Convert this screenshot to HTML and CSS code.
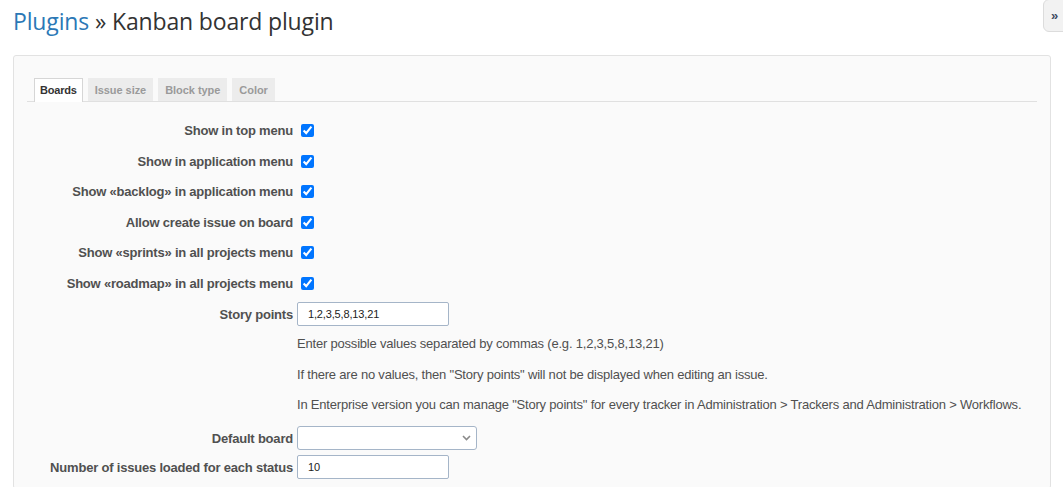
FILE: index.html
```html
<!DOCTYPE html>
<html lang="en">
<head>
<meta charset="utf-8">
<title>Kanban board plugin</title>
<link rel="stylesheet" href="styles.css">
</head>
<body>
<div class="sidebar-toggle">»</div>
<h2 class="title"><a class="crumb" href="#">Plugins</a> » Kanban board plugin</h2>
<div class="box">
  <div class="tabs">
    <span class="tab selected">Boards</span>
    <span class="tab">Issue size</span>
    <span class="tab">Block type</span>
    <span class="tab">Color</span>
  </div>
  <div class="form">
    <div class="row"><label class="lbl">Show in top menu</label><input class="cb" type="checkbox" checked></div>
    <div class="row"><label class="lbl">Show in application menu</label><input class="cb" type="checkbox" checked></div>
    <div class="row"><label class="lbl">Show «backlog» in application menu</label><input class="cb" type="checkbox" checked></div>
    <div class="row"><label class="lbl">Allow create issue on board</label><input class="cb" type="checkbox" checked></div>
    <div class="row"><label class="lbl">Show «sprints» in all projects menu</label><input class="cb" type="checkbox" checked></div>
    <div class="row"><label class="lbl">Show «roadmap» in all projects menu</label><input class="cb" type="checkbox" checked></div>
    <div class="row"><label class="lbl">Story points</label><input class="text" type="text" value="1,2,3,5,8,13,21"></div>
    <div class="help">
      <p>Enter possible values separated by commas (e.g. 1,2,3,5,8,13,21)</p>
      <p>If there are no values, then "Story points" will not be displayed when editing an issue.</p>
      <p>In Enterprise version you can manage "Story points" for every tracker in Administration &gt; Trackers and Administration &gt; Workflows.</p>
    </div>
    <div class="row row-select"><label class="lbl">Default board</label>
      <div class="select-wrap">
        <select class="select"><option></option></select>
        <svg class="chev" width="9" height="6" viewBox="0 0 9 6"><path d="M1 1 L4.5 4.5 L8 1" fill="none" stroke="#8a8a8a" stroke-width="1.6"/></svg>
      </div>
    </div>
    <div class="row row-num"><label class="lbl">Number of issues loaded for each status</label><input class="text" type="text" value="10"></div>
  </div>
</div>
</body>
</html>
```
FILE: styles.css
```css
html, body {
  margin: 0;
  padding: 0;
  background: #fff;
  overflow: hidden;
}
body {
  font-family: "Liberation Sans", Arial, sans-serif;
  font-size: 13px;
  color: #505050;
  position: relative;
  height: 487px;
}
.sidebar-toggle {
  position: absolute;
  top: -1px;
  right: -6px;
  width: 26px;
  height: 33px;
  background: #f2f2f2;
  border: 1px solid #dcdcdc;
  border-radius: 6px 0 0 6px;
  font-weight: bold;
  font-size: 13px;
  color: #3c4a60;
  line-height: 31px;
  padding-left: 7px;
  box-sizing: border-box;
}
.title {
  margin: 0;
  padding: 6px 0 0 13px;
  height: 49px;
  box-sizing: border-box;
  font-family: "Open Sans", sans-serif;
  font-weight: 400;
  font-size: 23px;
  line-height: 30px;
  color: #333;
  letter-spacing: -0.15px;
}
.crumb {
  color: #2b78b6;
  text-decoration: none;
}
.box {
  margin: 6px 12px 0 13px;
  border: 1px solid #e2e2e2;
  border-radius: 3px;
  background: #fafafa;
  padding: 22px 13px 0 13px;
  height: 410px;
}
.tabs {
  display: flex;
  gap: 5px;
  padding-left: 7px;
  border-bottom: 1px solid #e0e0e0;
  height: 23px;
}
.tab {
  height: 23px;
  box-sizing: border-box;
  padding: 0 6px;
  font-size: 11px;
  font-weight: bold;
  line-height: 22px;
  letter-spacing: -0.05px;
  color: #9a9a9a;
  background: #ececec;
  border: 1px solid #ececec;
  border-bottom: none;
}
.tab.selected {
  background: #fff;
  color: #333;
  border-color: #d6d6d6;
  height: 24px;
  padding: 0 5px;
  letter-spacing: -0.2px;
}
.form {
  padding-top: 13.2px;
}
.row {
  display: flex;
  align-items: center;
  height: 30.6px;
}
.lbl {
  width: 266px;
  text-align: right;
  font-weight: bold;
  color: #505050;
  letter-spacing: -0.2px;
  white-space: nowrap;
  flex: none;
}
.cb {
  margin: 0 0 0 8px;
  width: 13px;
  height: 13px;
}
.text {
  margin-left: 4px;
  width: 152px;
  height: 24px;
  box-sizing: border-box;
  border: 1px solid #a5b5c8;
  border-radius: 2px;
  padding: 0 10px;
  font-family: "Liberation Sans", Arial, sans-serif;
  font-size: 11px;
  letter-spacing: -0.15px;
  color: #222;
  background: #fff;
}
.help {
  padding-left: 270px;
}
.help p {
  margin: 0;
  line-height: 30.4px;
  letter-spacing: -0.2px;
  white-space: nowrap;
}
.row-select {
  margin-top: 3px;
  height: 29px;
}
.row-num {
  height: 29px;
}
.select-wrap {
  position: relative;
  margin-left: 4px;
  width: 180px;
  height: 24px;
}
.select {
  appearance: none;
  -webkit-appearance: none;
  width: 180px;
  height: 24px;
  border: 1px solid #a5b5c8;
  border-radius: 3px;
  background: #fff;
}
.chev {
  position: absolute;
  right: 6px;
  top: 9px;
}
```
